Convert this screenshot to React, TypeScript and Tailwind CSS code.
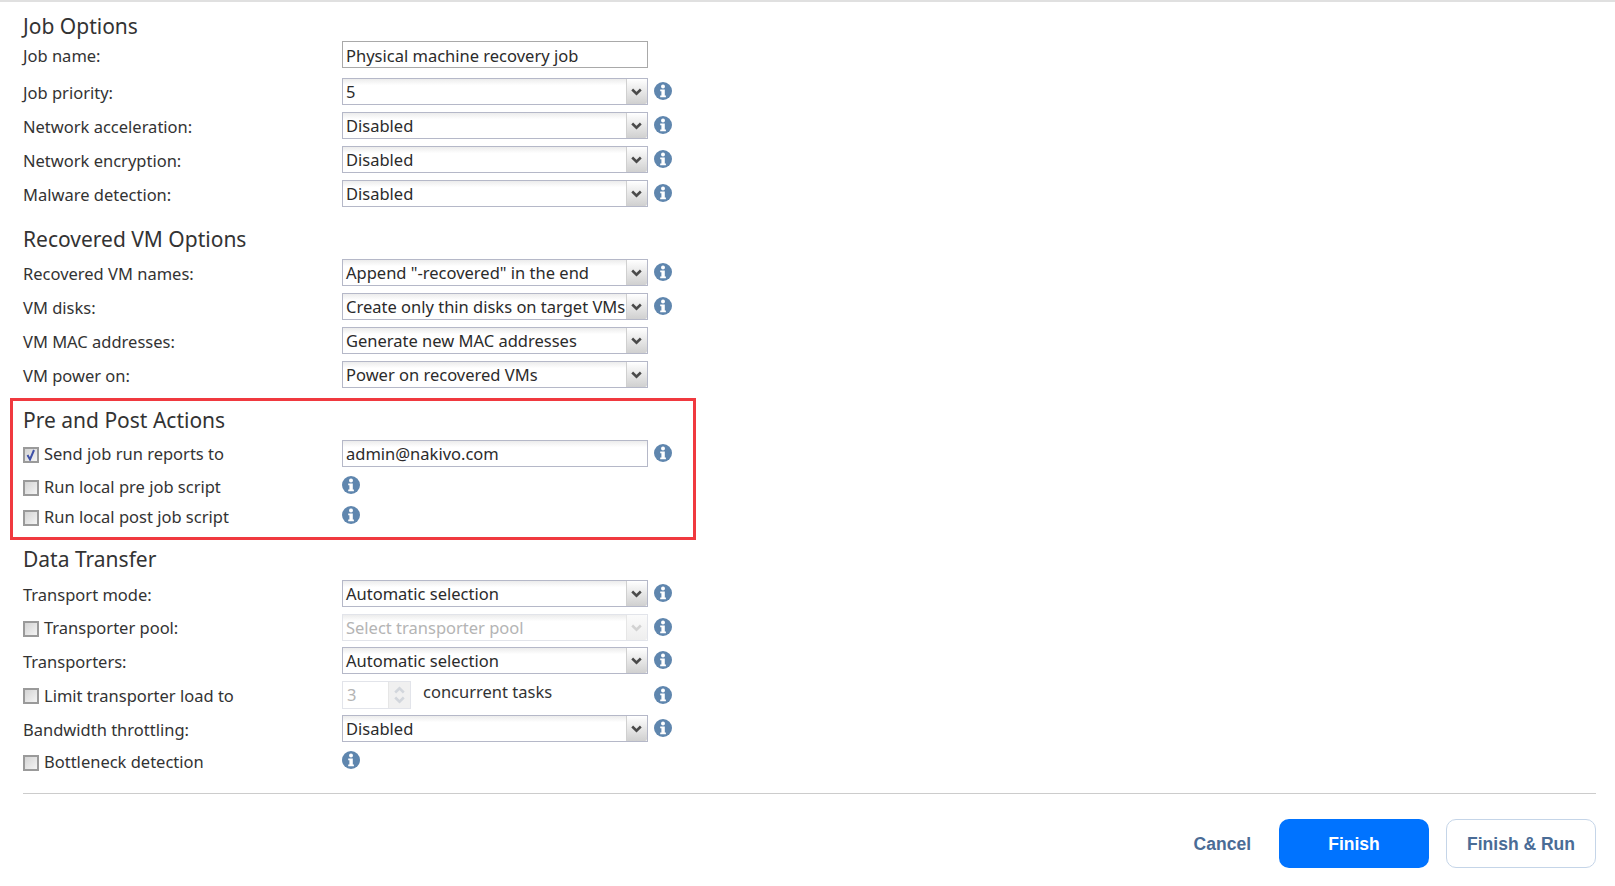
import { ReactNode } from "react";

function Info() {
  return (
    <svg width="18" height="18" viewBox="0 0 18 18" className="shrink-0">
      <circle cx="9" cy="9" r="9" fill="#5f86ae" />
      <circle cx="9" cy="4.6" r="2" fill="#fff" />
      <path d="M6.2 7.4h4.6v6h1.1v1.8H6.2v-1.8h1.2V9.2H6.2z" fill="#fff" />
    </svg>
  );
}

function Chevron({ color = "#4a4a4a" }: { color?: string }) {
  return (
    <svg width="11" height="8" viewBox="0 0 11 8">
      <path d="M1.2 1.5 5.5 5.6 9.8 1.5" fill="none" stroke={color} strokeWidth="2.6" />
    </svg>
  );
}

function Select({ value, disabled }: { value: string; disabled?: boolean }) {
  return (
    <div
      className={
        disabled
          ? "flex h-[27px] w-[306px] border border-[#e2e4ea] text-[#b4b4b4]"
          : "flex h-[27px] w-[306px] border border-[#b5b8c8] text-[#2b2b2b]"
      }
    >
      <div className="flex-1 overflow-hidden whitespace-nowrap bg-gradient-to-b from-[#ececec] to-white to-[25%] pl-[3px] leading-[25px]">
        {value}
      </div>
      <div
        className={
          disabled
            ? "flex w-[21px] items-center justify-center rounded-r-[2px] border-l border-[#e6e6e6] bg-gradient-to-b from-[#fafafa] to-[#eeeeee] pr-[2px]"
            : "flex w-[21px] items-center justify-center rounded-r-[2px] border-l border-[#d0d0d0] bg-gradient-to-b from-white to-[#d0d0d0] pr-[2px]"
        }
      >
        <Chevron color={disabled ? "#d2d2d2" : "#4a4a4a"} />
      </div>
    </div>
  );
}

function TextBox({ value, shaded }: { value: string; shaded?: boolean }) {
  return (
    <div
      className={
        shaded
          ? "h-[27px] w-[306px] border border-[#b5b8c8] bg-gradient-to-b from-[#ececec] to-white to-[25%] pl-[3px] leading-[25px] text-[#2b2b2b]"
          : "h-[27px] w-[306px] border border-[#a9a9a9] pl-[3px] leading-[27px] text-[#2b2b2b]"
      }
    >
      {value}
    </div>
  );
}

function Check({ checked }: { checked?: boolean }) {
  return (
    <div className="mr-[5px] flex h-[16px] w-[16px] shrink-0 items-center justify-center border-2 border-[#9a9a9a] bg-gradient-to-br from-[#d4d4d4] to-[#f4f4f4]">
      {checked && (
        <svg width="10" height="12" viewBox="0 0 10 12">
          <path d="M1.5 6 4 10.5 8 1" fill="none" stroke="#3f51a8" strokeWidth="2" />
        </svg>
      )}
    </div>
  );
}

function Row({
  label,
  check,
  checked,
  children,
  info,
  className,
}: {
  label: string;
  check?: boolean;
  checked?: boolean;
  children?: ReactNode;
  info?: boolean;
  className: string;
}) {
  return (
    <div className={`flex items-center ${className}`}>
      <div
        className={
          check
            ? "flex w-[319px] shrink-0 items-center pt-[2px] text-[#333]"
            : "flex w-[319px] shrink-0 items-center pt-[4px] text-[#333]"
        }
      >
        {check && <Check checked={checked} />}
        {label}
      </div>
      {children}
      {info && (
        <div className="mb-[1px] ml-[6px]">
          <Info />
        </div>
      )}
    </div>
  );
}

function Heading({ children, className }: { children: ReactNode; className: string }) {
  return <div className={`text-[21px] leading-[26px] text-[#333] ${className}`}>{children}</div>;
}

export default function App() {
  return (
    <div className="h-[886px] w-[1615px] overflow-hidden border-t-2 border-[#e0e0e0] bg-white text-[16.5px] font-['Noto_Sans',sans-serif]">
      <div className="pl-[23px] pr-[19px]">
        <Heading className="mt-[11px]">Job Options</Heading>
        <Row label="Job name:" className="mt-[2px] h-[27px]">
          <TextBox value="Physical machine recovery job" />
        </Row>
        <Row label="Job priority:" info className="mt-[10px] h-[27px]">
          <Select value="5" />
        </Row>
        <Row label="Network acceleration:" info className="mt-[7px] h-[27px]">
          <Select value="Disabled" />
        </Row>
        <Row label="Network encryption:" info className="mt-[7px] h-[27px]">
          <Select value="Disabled" />
        </Row>
        <Row label="Malware detection:" info className="mt-[7px] h-[27px]">
          <Select value="Disabled" />
        </Row>

        <Heading className="mt-[19px]">Recovered VM Options</Heading>
        <Row label="Recovered VM names:" info className="mt-[7px] h-[27px]">
          <Select value={'Append "-recovered" in the end'} />
        </Row>
        <Row label="VM disks:" info className="mt-[7px] h-[27px]">
          <Select value="Create only thin disks on target VMs" />
        </Row>
        <Row label="VM MAC addresses:" className="mt-[7px] h-[27px]">
          <Select value="Generate new MAC addresses" />
        </Row>
        <Row label="VM power on:" className="mt-[7px] h-[27px]">
          <Select value="Power on recovered VMs" />
        </Row>

        <div className="relative">
          <div className="pointer-events-none absolute left-[-13px] top-[10px] h-[142px] w-[686px] border-[3px] border-[#f0393f]" />
          <Heading className="pt-[19px]">Pre and Post Actions</Heading>
          <Row label="Send job run reports to" check checked info className="mt-[7px] h-[27px]">
            <TextBox value="admin@nakivo.com" shaded />
          </Row>
          <Row label="Run local pre job script" check className="mt-[6px] h-[27px]">
            <div className="mb-[4px]">
              <Info />
            </div>
          </Row>
          <Row label="Run local post job script" check className="mt-[3px] h-[27px]">
            <div className="mb-[4px]">
              <Info />
            </div>
          </Row>
        </div>

        <Heading className="mt-[16px]">Data Transfer</Heading>
        <Row label="Transport mode:" info className="mt-[8px] h-[27px]">
          <Select value="Automatic selection" />
        </Row>
        <Row label="Transporter pool:" check info className="mt-[7px] h-[27px]">
          <Select value="Select transporter pool" disabled />
        </Row>
        <Row label="Transporters:" info className="mt-[6px] h-[27px]">
          <Select value="Automatic selection" />
        </Row>
        <Row label="Limit transporter load to" check className="mt-[7px] h-[28px]">
          <div className="flex h-[28px] w-[69px] border border-[#e2e4ea] text-[#b4b4b4]">
            <div className="flex-1 pl-[4px] leading-[26px]">3</div>
            <div className="flex w-[22px] flex-col items-center justify-around border-l border-[#e6e6e6] bg-[#f0f0f0] py-[3px]">
              <div className="rotate-180">
                <Chevron color="#d2d6dc" />
              </div>
              <Chevron color="#d2d6dc" />
            </div>
          </div>
          <div className="ml-[12px] w-[231px] pb-[5px] text-[#333]">concurrent tasks</div>
          <Info />
        </Row>
        <Row label="Bandwidth throttling:" info className="mt-[6px] h-[27px]">
          <Select value="Disabled" />
        </Row>
        <Row label="Bottleneck detection" check className="mt-[6px] h-[27px]">
          <div className="mb-[4px]">
            <Info />
          </div>
        </Row>

        <div className="mt-[18px] border-t border-[#cccccc]" />
        <div className="mt-[25px] flex items-center justify-end font-['Liberation_Sans',sans-serif] text-[17.5px] font-bold text-[#4a6c96]">
          <button className="mr-[28px] pt-[1px]">Cancel</button>
          <button className="mr-[17px] h-[49px] w-[150px] rounded-[10px] bg-[#0073ff] pt-[1px] text-white">Finish</button>
          <button className="h-[49px] w-[150px] rounded-[10px] border border-[#c5d5e8] bg-white pt-[1px]">Finish &amp; Run</button>
        </div>
      </div>
    </div>
  );
}
